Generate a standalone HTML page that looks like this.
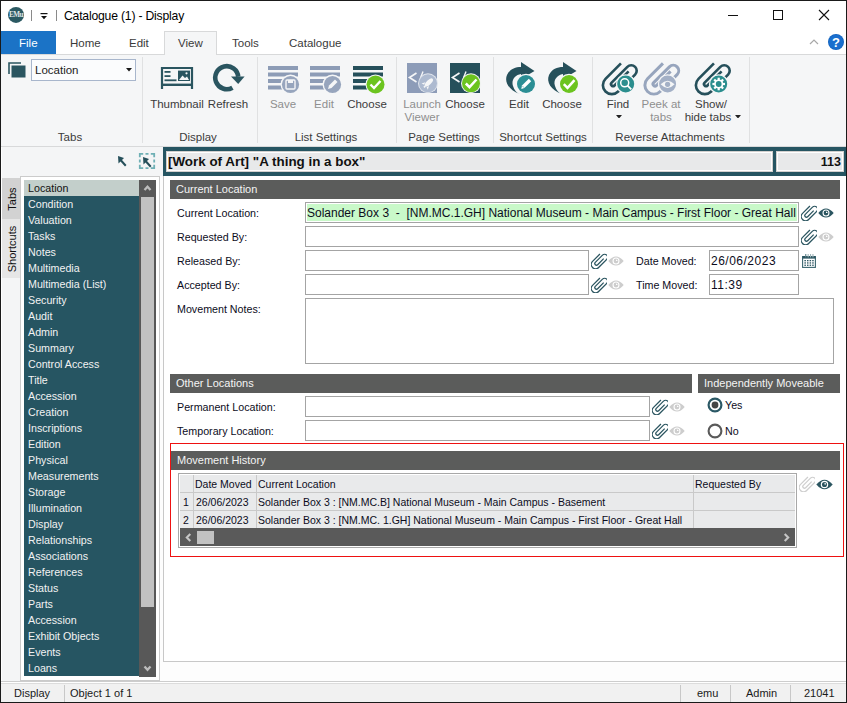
<!DOCTYPE html>
<html><head><meta charset="utf-8">
<style>
*{box-sizing:border-box;margin:0;padding:0}
html,body{width:847px;height:703px;overflow:hidden;background:#fff}
body{position:relative;font-family:"Liberation Sans",sans-serif;color:#1e1e1e}
.a{position:absolute}
.t{position:absolute;white-space:pre;line-height:14px}
#frame{left:0;top:0;width:847px;height:703px;border:1px solid #1a1a1a;z-index:50;pointer-events:none}
.sep{position:absolute;width:1px;background:#e0e1e2}
.rl{position:absolute;white-space:pre;font-size:11.5px;color:#3b3b3b;line-height:14px;text-align:center}
.dis{color:#8f8f8f}
.hdr{position:absolute;background:#5b5c5b;color:#f4f4f4;font-size:11px;line-height:19px;padding-left:6px;white-space:pre}
.fld{position:absolute;border:1px solid #a4a4a4;background:#fff;height:21px}
.lbl{position:absolute;white-space:pre;font-size:10.7px;line-height:14px;color:#0c0c1c}
.gt{position:absolute;white-space:pre;font-size:10.5px;line-height:14px;color:#0c0c1c}
.li{position:absolute;left:28px;font-size:10.7px;color:#f2f2f2;white-space:pre;line-height:16px}
</style></head><body>
<div id="frame" class="a"></div>

<!-- title bar -->
<svg class="a" style="left:7px;top:6px" width="18" height="18" viewBox="0 0 18 18"><circle cx="9" cy="8.9" r="8" fill="#2b5962"/><text x="9" y="11.2" font-family="Liberation Serif" font-weight="bold" font-size="7.2" fill="#e0e8e8" text-anchor="middle" letter-spacing="-0.5">EMu</text></svg>
<div class="a" style="left:31px;top:10px;width:1px;height:11px;background:#8a8a8a"></div>
<svg class="a" style="left:40px;top:13px" width="8" height="7" viewBox="0 0 8 7"><rect x="0.5" y="0" width="7" height="1.2" fill="#111"/><path d="M1 3 L7 3 L4 6.2 Z" fill="#111"/></svg>
<div class="a" style="left:56px;top:10px;width:1px;height:11px;background:#8a8a8a"></div>
<div class="t" style="left:64px;top:9px;font-size:12.2px;letter-spacing:-0.2px;color:#000">Catalogue (1) - Display</div>
<div class="a" style="left:728px;top:15px;width:10px;height:1px;background:#111"></div>
<div class="a" style="left:773px;top:10px;width:10px;height:10px;border:1px solid #111"></div>
<svg class="a" style="left:818px;top:9px" width="12" height="12" viewBox="0 0 12 12"><path d="M1 1 L11 11 M11 1 L1 11" stroke="#111" stroke-width="1.1"/></svg>

<!-- tabs row -->
<div class="a" style="left:1px;top:31px;width:55px;height:23px;background:#1b73c6"></div>
<div class="t" style="left:19px;top:36px;font-size:11.5px;color:#fff">File</div>
<div class="a" style="left:164px;top:31px;width:53px;height:24px;background:#f5f6f7;border:1px solid #d8d9da;border-bottom:none;z-index:2"></div>
<div class="t" style="left:70px;top:36px;font-size:11.5px;color:#3a3a3a">Home</div>
<div class="t" style="left:129px;top:36px;font-size:11.5px;color:#3a3a3a">Edit</div>
<div class="t" style="left:178px;top:36px;font-size:11.5px;color:#3a3a3a;z-index:3">View</div>
<div class="t" style="left:232px;top:36px;font-size:11.5px;color:#3a3a3a">Tools</div>
<div class="t" style="left:289px;top:36px;font-size:11.5px;color:#3a3a3a">Catalogue</div>
<svg class="a" style="left:809px;top:38px" width="10" height="7" viewBox="0 0 10 7"><path d="M1 6 L5 2 L9 6" stroke="#a8a8a8" stroke-width="1.2" fill="none"/></svg>
<svg class="a" style="left:827px;top:33px" width="18" height="18" viewBox="0 0 18 18"><circle cx="9" cy="9" r="8" fill="#1565c0"/><circle cx="9" cy="9" r="7.2" fill="#1a6fce"/><text x="9" y="13.6" font-family="Liberation Sans" font-weight="bold" font-size="13" fill="#fff" text-anchor="middle">?</text></svg>

<!-- ribbon body -->
<div class="a" style="left:1px;top:54px;width:845px;height:93px;background:#f5f6f7;border-top:1px solid #d8d9da;border-bottom:1px solid #d8d9da"></div>
<div class="sep" style="left:142px;top:57px;height:86px"></div>
<div class="sep" style="left:257px;top:57px;height:86px"></div>
<div class="sep" style="left:396px;top:57px;height:86px"></div>
<div class="sep" style="left:493px;top:57px;height:86px"></div>
<div class="sep" style="left:592px;top:57px;height:86px"></div>
<div class="sep" style="left:749px;top:57px;height:86px"></div>

<!-- tabs group -->
<svg class="a" style="left:8px;top:62px" width="18" height="16" viewBox="0 0 18 16"><path d="M1 12 V1 H13" stroke="#2a5560" stroke-width="1.6" fill="none"/><rect x="3.5" y="3.5" width="14" height="12" fill="#2a5560"/></svg>
<div class="a" style="left:31px;top:59px;width:105px;height:22px;border:1px solid #a8b6cc;background:#fbfcfd"></div>
<div class="t" style="left:35px;top:63px;font-size:11.5px;color:#222">Location</div>
<svg class="a" style="left:125.5px;top:68px" width="6" height="3.5" viewBox="0 0 6 3.5"><path d="M0 0 H6 L3 3.5 Z" fill="#1a1a1a"/></svg>
<div class="rl" style="left:50px;top:130px;width:40px">Tabs</div>

<!-- display group -->
<svg class="a" style="left:160px;top:66px" width="34" height="24" viewBox="0 0 34 24"><path d="M2 23 V2 H32 V23" stroke="#2a5560" stroke-width="2.2" fill="none"/><rect x="1" y="17.6" width="32" height="2.4" fill="#2a5560"/><rect x="4.5" y="5" width="6" height="1.8" fill="#2a5560"/><rect x="4.5" y="9.2" width="6" height="1.8" fill="#2a5560"/><rect x="4.5" y="13.4" width="12" height="1.8" fill="#2a5560"/><rect x="18" y="4.6" width="12" height="10.4" fill="#2a5560"/><path d="M19 14 L22.5 9.5 L25 12 L27 10.5 L29 14Z" fill="#f5f6f7"/><circle cx="26.5" cy="7.3" r="1.1" fill="#f5f6f7"/></svg>
<svg class="a" style="left:212px;top:63px" width="34" height="30" viewBox="0 0 34 30"><path d="M20.45 24.66 A11.5 11.5 0 1 1 26.2 13.7" stroke="#2a5560" stroke-width="4.6" fill="none"/><path d="M19 13.4 L32.6 13.4 L26.2 21 Z" fill="#2a5560"/></svg>
<div class="rl" style="left:144px;top:97px;width:66px">Thumbnail</div>
<div class="rl" style="left:206px;top:97px;width:44px">Refresh</div>
<div class="rl" style="left:170px;top:130px;width:56px">Display</div>

<!-- list settings -->
<svg class="a" style="left:267px;top:65px" width="34" height="30" viewBox="0 0 34 30"><g fill="#8d9cb6"><rect x="1" y="1" width="30" height="4"/><rect x="1" y="7.5" width="30" height="4"/><rect x="1" y="14" width="20" height="4"/><rect x="1" y="20.5" width="16" height="4"/></g><circle cx="23.5" cy="19.5" r="10" fill="#f5f6f7"/><circle cx="23.5" cy="19.5" r="8.6" fill="#97a5bd"/><rect x="19" y="15" width="9" height="9" rx="1" fill="none" stroke="#f5f6f7" stroke-width="1.4"/><rect x="21" y="15" width="5" height="3" fill="#f5f6f7"/></svg>
<svg class="a" style="left:309px;top:65px" width="34" height="30" viewBox="0 0 34 30"><g fill="#8d9cb6"><rect x="1" y="1" width="30" height="4"/><rect x="1" y="7.5" width="30" height="4"/><rect x="1" y="14" width="20" height="4"/><rect x="1" y="20.5" width="16" height="4"/></g><circle cx="23.5" cy="19.5" r="10" fill="#f5f6f7"/><circle cx="23.5" cy="19.5" r="8.6" fill="#97a5bd"/><path d="M19 24 L20 20.5 L26 14.5 L28.5 17 L22.5 23 Z" fill="#f5f6f7"/></svg>
<svg class="a" style="left:352px;top:65px" width="34" height="30" viewBox="0 0 34 30"><g fill="#26505b"><rect x="1" y="1" width="30" height="4"/><rect x="1" y="7.5" width="30" height="4"/><rect x="1" y="14" width="20" height="4"/><rect x="1" y="20.5" width="16" height="4"/></g><circle cx="23.5" cy="19.5" r="10" fill="#f5f6f7"/><circle cx="23.5" cy="19.5" r="9" fill="#6cc41f"/><path d="M18.5 19.5 L22 23 L28.5 16" stroke="#fff" stroke-width="2.4" fill="none"/></svg>
<div class="rl dis" style="left:266px;top:97px;width:34px">Save</div>
<div class="rl dis" style="left:309px;top:97px;width:30px">Edit</div>
<div class="rl" style="left:344px;top:97px;width:46px">Choose</div>
<div class="rl" style="left:285px;top:130px;width:82px">List Settings</div>

<!-- page settings -->
<svg class="a" style="left:406px;top:62px" width="34" height="32" viewBox="0 0 34 32"><rect x="1" y="1" width="30" height="30" fill="#8d9cb8"/><path d="M10.5 11 L3.5 15.5 L10.5 20" stroke="#f5f6f7" stroke-width="1.7" fill="none"/><path d="M17 9.5 L14.5 16" stroke="#f5f6f7" stroke-width="1.4"/><circle cx="22" cy="21.3" r="10" fill="#dfe4ec"/><circle cx="22" cy="21.3" r="9" fill="#adbad0"/><g transform="rotate(45 22 21.3)" fill="#f5f6f7"><ellipse cx="22" cy="20" rx="2.3" ry="5.2"/><path d="M19.3 22.5 L17.6 26 L20.2 25 Z M24.7 22.5 L26.4 26 L23.8 25 Z"/><rect x="21.2" y="25" width="1.6" height="2"/></g></svg>
<svg class="a" style="left:449px;top:62px" width="34" height="32" viewBox="0 0 34 32"><rect x="1" y="1" width="30" height="30" fill="#26505b"/><path d="M10.5 11 L3.5 15.5 L10.5 20" stroke="#f5f6f7" stroke-width="1.7" fill="none"/><path d="M17 9.5 L14.5 16" stroke="#f5f6f7" stroke-width="1.4"/><circle cx="22" cy="21.3" r="10" fill="#f0f3f0"/><circle cx="22" cy="21.3" r="9" fill="#6cc41f"/><path d="M16.8 21.5 L20.5 25.2 L27.5 17.5" stroke="#fff" stroke-width="2.5" fill="none"/></svg>
<div class="rl dis" style="left:400px;top:97px;width:44px">Launch</div>
<div class="rl dis" style="left:400px;top:110px;width:44px">Viewer</div>
<div class="rl" style="left:442px;top:97px;width:46px">Choose</div>
<div class="rl" style="left:400px;top:130px;width:88px">Page Settings</div>

<!-- shortcut settings -->
<svg class="a" style="left:504px;top:61px" width="34" height="34" viewBox="0 0 34 34"><path d="M15.5 33 C5 29 0 21 3 14 C6 8 11 6 17 6 L17 1 L30.5 10 L17 18 L17 13 C11 14 7 19 9 25 C10 29 13 32 15.5 33 Z" fill="#26505b"/><circle cx="22" cy="23" r="10.3" fill="#f5f6f7"/><circle cx="22" cy="23" r="9" fill="#2b8e94"/><path d="M17.3 28 L18 24.6 L24.8 17.8 L27.2 20.2 L20.4 27 Z" fill="#fff"/><path d="M18.6 25.2 L20 26.6" stroke="#2b8e94" stroke-width="0.7"/></svg>
<svg class="a" style="left:546px;top:61px" width="34" height="34" viewBox="0 0 34 34"><path d="M15.5 33 C5 29 0 21 3 14 C6 8 11 6 17 6 L17 1 L30.5 10 L17 18 L17 13 C11 14 7 19 9 25 C10 29 13 32 15.5 33 Z" fill="#26505b"/><circle cx="23" cy="23" r="10.3" fill="#f5f6f7"/><circle cx="23" cy="23" r="9" fill="#6cc41f"/><path d="M17.8 23.2 L21.5 26.9 L28.5 19.2" stroke="#fff" stroke-width="2.5" fill="none"/></svg>
<div class="rl" style="left:501px;top:97px;width:36px">Edit</div>
<div class="rl" style="left:539px;top:97px;width:46px">Choose</div>
<div class="rl" style="left:494px;top:130px;width:98px">Shortcut Settings</div>

<!-- reverse attachments -->
<svg class="a" style="left:599px;top:58px" width="40" height="40" viewBox="-20 -20 40 40"><path transform="rotate(45) scale(1.15)" d="M -7.8 -10.2 L -7.8 8.8 A 7.8 7.8 0 0 0 7.8 8.8 L 7.8 -12 A 4.75 4.75 0 0 0 -1.7 -12 L -1.7 7.35 A 1.75 1.75 0 0 0 1.8 7.35 L 1.8 -10" stroke="#26505b" stroke-width="2.3" fill="none"/><circle cx="6.7000000000000455" cy="6" r="9.8" fill="#f5f6f7"/><circle cx="6.7000000000000455" cy="6" r="8.5" fill="#2b8e8e"/><g transform="translate(6.7000000000000455 6)"><circle cx="-1" cy="-1.2" r="4" stroke="#fff" stroke-width="1.5" fill="none"/><path d="M1.9 1.7 L5.6 5.4" stroke="#fff" stroke-width="1.8"/></g></svg>
<svg class="a" style="left:641px;top:58px" width="40" height="40" viewBox="-20 -20 40 40"><path transform="rotate(45) scale(1.15)" d="M -7.8 -10.2 L -7.8 8.8 A 7.8 7.8 0 0 0 7.8 8.8 L 7.8 -12 A 4.75 4.75 0 0 0 -1.7 -12 L -1.7 7.35 A 1.75 1.75 0 0 0 1.8 7.35 L 1.8 -10" stroke="#97a5bd" stroke-width="2.6" fill="none"/><circle cx="6.600000000000023" cy="6" r="9.8" fill="#f5f6f7"/><circle cx="6.600000000000023" cy="6" r="8.5" fill="#a3b0c6"/><g transform="translate(6.600000000000023 6)"><path d="M-7 0.3 Q0 -7 7 0.3 Q0 7.6 -7 0.3Z" fill="#f5f6f7"/><circle cx="0" cy="0.3" r="2.6" fill="#a3b0c6"/></g></svg>
<svg class="a" style="left:692px;top:58px" width="40" height="40" viewBox="-20 -20 40 40"><path transform="rotate(45) scale(1.15)" d="M -7.8 -10.2 L -7.8 8.8 A 7.8 7.8 0 0 0 7.8 8.8 L 7.8 -12 A 4.75 4.75 0 0 0 -1.7 -12 L -1.7 7.35 A 1.75 1.75 0 0 0 1.8 7.35 L 1.8 -10" stroke="#26505b" stroke-width="2.3" fill="none"/><circle cx="6.7000000000000455" cy="6" r="9.8" fill="#f5f6f7"/><circle cx="6.7000000000000455" cy="6" r="8.5" fill="#2b8e8e"/><g transform="translate(6.7000000000000455 6)"><rect x="-1.1" y="-6.3" width="2.2" height="2.6" fill="#fff" transform="rotate(0)"/><rect x="-1.1" y="-6.3" width="2.2" height="2.6" fill="#fff" transform="rotate(45)"/><rect x="-1.1" y="-6.3" width="2.2" height="2.6" fill="#fff" transform="rotate(90)"/><rect x="-1.1" y="-6.3" width="2.2" height="2.6" fill="#fff" transform="rotate(135)"/><rect x="-1.1" y="-6.3" width="2.2" height="2.6" fill="#fff" transform="rotate(180)"/><rect x="-1.1" y="-6.3" width="2.2" height="2.6" fill="#fff" transform="rotate(225)"/><rect x="-1.1" y="-6.3" width="2.2" height="2.6" fill="#fff" transform="rotate(270)"/><rect x="-1.1" y="-6.3" width="2.2" height="2.6" fill="#fff" transform="rotate(315)"/><circle cx="0" cy="0" r="4.6" fill="#fff"/><circle cx="0" cy="0" r="2.9" fill="#2b8e8e"/></g></svg>
<div class="rl" style="left:600px;top:97px;width:36px">Find</div>
<svg class="a" style="left:615.5px;top:114.5px" width="6" height="3.5" viewBox="0 0 6 3.5"><path d="M0 0 H6 L3 3.5 Z" fill="#222"/></svg>
<div class="rl dis" style="left:638px;top:97px;width:46px">Peek at</div>
<div class="rl dis" style="left:638px;top:110px;width:46px">tabs</div>
<div class="rl" style="left:688px;top:97px;width:46px">Show/</div>
<div class="rl" style="left:680px;top:110px;width:56px">hide tabs</div>
<svg class="a" style="left:735px;top:114.5px" width="6" height="3.5" viewBox="0 0 6 3.5"><path d="M0 0 H6 L3 3.5 Z" fill="#222"/></svg>
<div class="rl" style="left:606px;top:130px;width:128px">Reverse Attachments</div>

<!-- below ribbon background -->
<div class="a" style="left:1px;top:147px;width:162px;height:535px;background:#f4f5f6"></div>
<div class="a" style="left:160px;top:176px;width:686px;height:505px;background:#fdfdfd"></div>

<!-- pointer icons -->
<svg class="a" style="left:116px;top:154px" width="12" height="14" viewBox="0 0 12 14"><path d="M2 2 L8 4 L6 6 L10.5 11 L9 12.5 L4.5 7.5 L2.5 9.5 Z" fill="#26505b"/></svg>
<svg class="a" style="left:138px;top:152px" width="18" height="18" viewBox="0 0 18 18"><path d="M1.8 5.2 V1.8 H5.2 M12.8 1.8 H16.2 V5.2 M16.2 12.8 V16.2 H12.8 M5.2 16.2 H1.8 V12.8 M7.5 1.8 H10.5 M7.5 16.2 H10.5 M1.8 7.5 V10.5 M16.2 7.5 V10.5" stroke="#6fb0b5" stroke-width="1.8" fill="none"/><path d="M5 5 L11 7 L9 9 L13.5 14 L12 15.5 L7.5 10.5 L5.5 12.5 Z" fill="#26505b"/></svg>

<!-- vertical tabs -->
<div class="a" style="left:1px;top:147px;width:1px;height:535px;background:#fff"></div>
<div class="a" style="left:2px;top:178px;width:18px;height:41px;background:#d2d2d2"></div>
<div class="a" style="left:2px;top:219px;width:18px;height:59px;background:#e6e6e6"></div>
<div class="t" style="left:-7px;top:192px;width:38px;text-align:center;font-size:11px;transform:rotate(-90deg);color:#111">Tabs</div>
<div class="t" style="left:-19px;top:242px;width:62px;text-align:center;font-size:11px;transform:rotate(-90deg);color:#111">Shortcuts</div>

<!-- left panel -->
<div class="a" style="left:20px;top:176px;width:140px;height:505px;background:#fff;border:1px solid #cbcbcb"></div>
<div class="a" style="left:24px;top:180px;width:115px;height:496px;background:#265562"></div>
<div class="a" style="left:24px;top:180px;width:115px;height:16px;background:#c3cfcb"></div>
<div class="a" style="left:139px;top:180px;width:17px;height:497px;background:#585858"></div>
<div class="a" style="left:141px;top:197px;width:13px;height:410px;background:#c2c2c2"></div>
<svg class="a" style="left:143px;top:185px" width="9" height="7" viewBox="0 0 9 7"><path d="M1.5 5 L4.5 1.8 L7.5 5" stroke="#bdbdbd" stroke-width="2.3" fill="none"/></svg>
<svg class="a" style="left:143px;top:665px" width="9" height="7" viewBox="0 0 9 7"><path d="M1.5 1.5 L4.5 4.7 L7.5 1.5" stroke="#bdbdbd" stroke-width="2.3" fill="none"/></svg>
<div id="list">
<div class="li" style="top:180px;color:#111">Location</div>
<div class="li" style="top:196px">Condition</div>
<div class="li" style="top:212px">Valuation</div>
<div class="li" style="top:228px">Tasks</div>
<div class="li" style="top:244px">Notes</div>
<div class="li" style="top:260px">Multimedia</div>
<div class="li" style="top:276px">Multimedia (List)</div>
<div class="li" style="top:292px">Security</div>
<div class="li" style="top:308px">Audit</div>
<div class="li" style="top:324px">Admin</div>
<div class="li" style="top:340px">Summary</div>
<div class="li" style="top:356px">Control Access</div>
<div class="li" style="top:372px">Title</div>
<div class="li" style="top:388px">Accession</div>
<div class="li" style="top:404px">Creation</div>
<div class="li" style="top:420px">Inscriptions</div>
<div class="li" style="top:436px">Edition</div>
<div class="li" style="top:452px">Physical</div>
<div class="li" style="top:468px">Measurements</div>
<div class="li" style="top:484px">Storage</div>
<div class="li" style="top:500px">Illumination</div>
<div class="li" style="top:516px">Display</div>
<div class="li" style="top:532px">Relationships</div>
<div class="li" style="top:548px">Associations</div>
<div class="li" style="top:564px">References</div>
<div class="li" style="top:580px">Status</div>
<div class="li" style="top:596px">Parts</div>
<div class="li" style="top:612px">Accession</div>
<div class="li" style="top:628px">Exhibit Objects</div>
<div class="li" style="top:644px">Events</div>
<div class="li" style="top:660px">Loans</div>
</div>

<!-- record title bar -->
<div class="a" style="left:163px;top:147px;width:683px;height:29px;background:#265562"></div>
<div class="a" style="left:166px;top:151px;width:607px;height:21px;background:#e8e9ea;border:1px solid #d2d0ce;box-shadow:inset 0 0 0 1px #fff"></div>
<div class="a" style="left:776px;top:151px;width:68px;height:21px;background:#e8e9ea;border:1px solid #d2d0ce;box-shadow:inset 0 0 0 1px #fff"></div>
<div class="t" style="left:168px;top:155px;font-size:13.4px;font-weight:bold;color:#111">[Work of Art] "A thing in a box"</div>
<div class="t" style="left:776px;top:155px;width:65px;text-align:right;font-size:12.5px;font-weight:bold;color:#111">113</div>

<!-- main content -->
<div class="a" style="left:163px;top:176px;width:683px;height:486px;background:#fff;border-left:1px solid #c8c8c8;border-bottom:1px solid #c8c8c8"></div>

<div class="hdr" style="left:170px;top:180px;width:670px">Current Location</div>
<div class="lbl" style="left:177px;top:206px">Current Location:</div>
<div class="fld" style="left:305px;top:202px;width:494px;background:#c9f9c9;box-shadow:inset 0 0 0 1px #fff"></div>
<div class="t" style="left:307px;top:206px;font-size:12px;color:#0c0c1c">Solander Box 3  -  [NM.MC.1.GH] National Museum - Main Campus - First Floor - Great Hall</div>
<div class="lbl" style="left:177px;top:230px">Requested By:</div>
<div class="fld" style="left:305px;top:226px;width:494px"></div>
<div class="lbl" style="left:177px;top:254px">Released By:</div>
<div class="fld" style="left:305px;top:250px;width:284px"></div>
<div class="lbl" style="left:177px;top:278px">Accepted By:</div>
<div class="fld" style="left:305px;top:274px;width:284px"></div>
<div class="lbl" style="left:636px;top:254px">Date Moved:</div>
<div class="fld" style="left:709px;top:250px;width:90px"></div>
<div class="t" style="left:711px;top:254px;font-size:12px;letter-spacing:0.5px;color:#0c0c1c">26/06/2023</div>
<div class="lbl" style="left:636px;top:278px">Time Moved:</div>
<div class="fld" style="left:709px;top:274px;width:90px"></div>
<div class="t" style="left:711px;top:278px;font-size:12px;letter-spacing:0.5px;color:#0c0c1c">11:39</div>
<div class="lbl" style="left:177px;top:302px">Movement Notes:</div>
<div class="fld" style="left:305px;top:298px;width:529px;height:66px"></div>

<div class="hdr" style="left:170px;top:374px;width:522px">Other Locations</div>
<div class="hdr" style="left:698px;top:374px;width:142px">Independently Moveable</div>
<div class="lbl" style="left:177px;top:400px">Permanent Location:</div>
<div class="fld" style="left:305px;top:396px;width:345px"></div>
<div class="lbl" style="left:177px;top:424px">Temporary Location:</div>
<div class="fld" style="left:305px;top:420px;width:345px"></div>

<svg class="a" style="left:801.0px;top:205.0px" width="16" height="16" viewBox="-16 -16 32 32"><path transform="rotate(45) scale(1.1)" d="M -7.8 -10.2 L -7.8 8.8 A 7.8 7.8 0 0 0 7.8 8.8 L 7.8 -12 A 5.4 5.4 0 0 0 -3 -12 L -3 6.5 A 3 3 0 0 0 3 6.5 L 3 -9" stroke="#2b5560" stroke-width="2.3" fill="none"/></svg>
<svg class="a" style="left:818px;top:208.0px" width="16" height="10" viewBox="0 0 16 10"><path d="M0.3 5 Q8 -4 15.7 5 Q8 14 0.3 5Z" fill="#2b5560"/><circle cx="8" cy="5" r="3.5" fill="#fff"/><circle cx="8" cy="5" r="2.4" fill="#2b5560"/><path d="M8 5 V3.4 A1.6 1.6 0 0 1 9.6 5 Z" fill="#fff"/></svg>
<svg class="a" style="left:801.0px;top:229.0px" width="16" height="16" viewBox="-16 -16 32 32"><path transform="rotate(45) scale(1.1)" d="M -7.8 -10.2 L -7.8 8.8 A 7.8 7.8 0 0 0 7.8 8.8 L 7.8 -12 A 5.4 5.4 0 0 0 -3 -12 L -3 6.5 A 3 3 0 0 0 3 6.5 L 3 -9" stroke="#2b5560" stroke-width="2.3" fill="none"/></svg>
<svg class="a" style="left:818px;top:232.0px" width="16" height="10" viewBox="0 0 16 10"><path d="M0.3 5 Q8 -4 15.7 5 Q8 14 0.3 5Z" fill="#cdcdcd"/><circle cx="8" cy="5" r="3.5" fill="#fff"/><circle cx="8" cy="5" r="2.4" fill="#cdcdcd"/><path d="M8 5 V3.4 A1.6 1.6 0 0 1 9.6 5 Z" fill="#fff"/></svg>
<svg class="a" style="left:591.0px;top:253.0px" width="16" height="16" viewBox="-16 -16 32 32"><path transform="rotate(45) scale(1.1)" d="M -7.8 -10.2 L -7.8 8.8 A 7.8 7.8 0 0 0 7.8 8.8 L 7.8 -12 A 5.4 5.4 0 0 0 -3 -12 L -3 6.5 A 3 3 0 0 0 3 6.5 L 3 -9" stroke="#2b5560" stroke-width="2.3" fill="none"/></svg>
<svg class="a" style="left:608px;top:256.0px" width="16" height="10" viewBox="0 0 16 10"><path d="M0.3 5 Q8 -4 15.7 5 Q8 14 0.3 5Z" fill="#cdcdcd"/><circle cx="8" cy="5" r="3.5" fill="#fff"/><circle cx="8" cy="5" r="2.4" fill="#cdcdcd"/><path d="M8 5 V3.4 A1.6 1.6 0 0 1 9.6 5 Z" fill="#fff"/></svg>
<svg class="a" style="left:591.0px;top:277.0px" width="16" height="16" viewBox="-16 -16 32 32"><path transform="rotate(45) scale(1.1)" d="M -7.8 -10.2 L -7.8 8.8 A 7.8 7.8 0 0 0 7.8 8.8 L 7.8 -12 A 5.4 5.4 0 0 0 -3 -12 L -3 6.5 A 3 3 0 0 0 3 6.5 L 3 -9" stroke="#2b5560" stroke-width="2.3" fill="none"/></svg>
<svg class="a" style="left:608px;top:280.0px" width="16" height="10" viewBox="0 0 16 10"><path d="M0.3 5 Q8 -4 15.7 5 Q8 14 0.3 5Z" fill="#cdcdcd"/><circle cx="8" cy="5" r="3.5" fill="#fff"/><circle cx="8" cy="5" r="2.4" fill="#cdcdcd"/><path d="M8 5 V3.4 A1.6 1.6 0 0 1 9.6 5 Z" fill="#fff"/></svg>
<svg class="a" style="left:652.0px;top:399.0px" width="16" height="16" viewBox="-16 -16 32 32"><path transform="rotate(45) scale(1.1)" d="M -7.8 -10.2 L -7.8 8.8 A 7.8 7.8 0 0 0 7.8 8.8 L 7.8 -12 A 5.4 5.4 0 0 0 -3 -12 L -3 6.5 A 3 3 0 0 0 3 6.5 L 3 -9" stroke="#2b5560" stroke-width="2.3" fill="none"/></svg>
<svg class="a" style="left:669px;top:402.0px" width="16" height="10" viewBox="0 0 16 10"><path d="M0.3 5 Q8 -4 15.7 5 Q8 14 0.3 5Z" fill="#cdcdcd"/><circle cx="8" cy="5" r="3.5" fill="#fff"/><circle cx="8" cy="5" r="2.4" fill="#cdcdcd"/><path d="M8 5 V3.4 A1.6 1.6 0 0 1 9.6 5 Z" fill="#fff"/></svg>
<svg class="a" style="left:652.0px;top:423.0px" width="16" height="16" viewBox="-16 -16 32 32"><path transform="rotate(45) scale(1.1)" d="M -7.8 -10.2 L -7.8 8.8 A 7.8 7.8 0 0 0 7.8 8.8 L 7.8 -12 A 5.4 5.4 0 0 0 -3 -12 L -3 6.5 A 3 3 0 0 0 3 6.5 L 3 -9" stroke="#2b5560" stroke-width="2.3" fill="none"/></svg>
<svg class="a" style="left:669px;top:426.0px" width="16" height="10" viewBox="0 0 16 10"><path d="M0.3 5 Q8 -4 15.7 5 Q8 14 0.3 5Z" fill="#cdcdcd"/><circle cx="8" cy="5" r="3.5" fill="#fff"/><circle cx="8" cy="5" r="2.4" fill="#cdcdcd"/><path d="M8 5 V3.4 A1.6 1.6 0 0 1 9.6 5 Z" fill="#fff"/></svg>
<svg class="a" style="left:799.0px;top:476.0px" width="16" height="16" viewBox="-16 -16 32 32"><path transform="rotate(45) scale(1.1)" d="M -7.8 -10.2 L -7.8 8.8 A 7.8 7.8 0 0 0 7.8 8.8 L 7.8 -12 A 5.4 5.4 0 0 0 -3 -12 L -3 6.5 A 3 3 0 0 0 3 6.5 L 3 -9" stroke="#cfcfcf" stroke-width="2.3" fill="none"/></svg>
<svg class="a" style="left:816px;top:478.5px" width="17" height="11" viewBox="0 0 16 10"><path d="M0.3 5 Q8 -4 15.7 5 Q8 14 0.3 5Z" fill="#2b5560"/><circle cx="8" cy="5" r="3.5" fill="#fff"/><circle cx="8" cy="5" r="2.4" fill="#2b5560"/><path d="M8 5 V3.4 A1.6 1.6 0 0 1 9.6 5 Z" fill="#fff"/></svg>
<svg class="a" style="left:802px;top:254px" width="14" height="14" viewBox="0 0 14 14"><rect x="0.6" y="2.6" width="12.8" height="10.8" fill="none" stroke="#3b6670" stroke-width="1.1"/><rect x="0.5" y="2" width="13" height="2.6" fill="#2b5560"/><g fill="#2b5560"><rect x="2.4" y="6.0" width="1.5" height="1.3"/><rect x="5.0" y="6.0" width="1.5" height="1.3"/><rect x="7.6" y="6.0" width="1.5" height="1.3"/><rect x="10.200000000000001" y="6.0" width="1.5" height="1.3"/><rect x="2.4" y="8.3" width="1.5" height="1.3"/><rect x="5.0" y="8.3" width="1.5" height="1.3"/><rect x="7.6" y="8.3" width="1.5" height="1.3"/><rect x="10.200000000000001" y="8.3" width="1.5" height="1.3"/><rect x="2.4" y="10.6" width="1.5" height="1.3"/><rect x="5.0" y="10.6" width="1.5" height="1.3"/><rect x="7.6" y="10.6" width="1.5" height="1.3"/><rect x="10.200000000000001" y="10.6" width="1.5" height="1.3"/></g><g fill="#5f8288"><rect x="3.2" y="0" width="1.1" height="3.4"/><rect x="5.6" y="0" width="1.1" height="3.4" fill="#9fb4b8"/><rect x="8" y="0" width="1.1" height="3.4" fill="#9fb4b8"/><rect x="10.4" y="0" width="1.1" height="3.4" fill="#9fb4b8"/></g></svg>
<!-- radios -->
<svg class="a" style="left:706.5px;top:396.5px" width="16" height="16" viewBox="0 0 16 16"><circle cx="8" cy="8" r="6.4" stroke="#2b5865" stroke-width="2.2" fill="#fff"/><circle cx="8" cy="8" r="3.4" fill="#454545"/></svg>
<div class="lbl" style="left:725px;top:398px">Yes</div>
<svg class="a" style="left:706.5px;top:422.6px" width="16" height="16" viewBox="0 0 16 16"><circle cx="8" cy="8" r="6.4" stroke="#5a5a5a" stroke-width="2.1" fill="#fff"/></svg>
<div class="lbl" style="left:725px;top:424px">No</div>

<!-- movement history -->
<div class="a" style="left:170px;top:443px;width:674px;height:114px;border:1px solid #ee1111"></div>
<div class="hdr" style="left:171px;top:451px;width:669px">Movement History</div>
<div class="a" style="left:178px;top:473px;width:619px;height:75px;border:1px solid #a8a8a8;background:#e9eaeb"></div>
<div class="a" style="left:179px;top:474px;width:617px;height:73px;background:#fff"></div>
<div class="a" style="left:180px;top:475px;width:615px;height:53px;background:#e9eaeb"></div>
<div class="a" style="left:180px;top:492px;width:615px;height:1px;background:#c9c9c9"></div>
<div class="a" style="left:180px;top:510px;width:615px;height:1px;background:#c9c9c9"></div>
<div class="a" style="left:193px;top:475px;width:1px;height:53px;background:#c9c9c9"></div>
<div class="a" style="left:256px;top:475px;width:1px;height:53px;background:#c9c9c9"></div>
<div class="a" style="left:693px;top:475px;width:1px;height:53px;background:#c9c9c9"></div>
<div class="a" style="left:180px;top:528px;width:615px;height:18px;background:#5a5a5a"></div>
<div class="a" style="left:197px;top:531px;width:17px;height:13px;background:#c2c2c2"></div>
<svg class="a" style="left:185px;top:533px" width="7" height="9" viewBox="0 0 7 9"><path d="M5.3 1 L1.8 4.5 L5.3 8" stroke="#c6c6c6" stroke-width="2.1" fill="none"/></svg>
<svg class="a" style="left:783px;top:533px" width="7" height="9" viewBox="0 0 7 9"><path d="M1.7 1 L5.2 4.5 L1.7 8" stroke="#c6c6c6" stroke-width="2.1" fill="none"/></svg>
<div class="gt" style="left:195px;top:477px">Date Moved</div>
<div class="gt" style="left:258px;top:477px">Current Location</div>
<div class="gt" style="left:695px;top:477px">Requested By</div>
<div class="gt" style="left:183px;top:495px">1</div>
<div class="gt" style="left:196px;top:495px">26/06/2023</div>
<div class="gt" style="left:258px;top:495px">Solander Box 3 : [NM.MC.B] National Museum - Main Campus - Basement</div>
<div class="gt" style="left:183px;top:513px">2</div>
<div class="gt" style="left:196px;top:513px">26/06/2023</div>
<div class="gt" style="left:258px;top:513px">Solander Box 3 : [NM.MC. 1.GH] National Museum - Main Campus - First Floor - Great Hall</div>

<!-- status bar -->
<div class="a" style="left:1px;top:681px;width:845px;height:1px;background:#cdcdcd"></div>
<div class="a" style="left:1px;top:682px;width:845px;height:1px;background:#fff"></div>
<div class="a" style="left:1px;top:683px;width:845px;height:1px;background:#dcdcdc"></div>
<div class="a" style="left:1px;top:684px;width:845px;height:18px;background:#f1f1f1"></div>
<div class="t" style="left:14px;top:686px;font-size:11px;color:#1a1a1a">Display</div>
<div class="a" style="left:64px;top:685px;width:1px;height:17px;background:#c8c8c8"></div>
<div class="t" style="left:70px;top:686px;font-size:11px;color:#1a1a1a">Object 1 of 1</div>
<div class="a" style="left:680px;top:685px;width:1px;height:17px;background:#c8c8c8"></div>
<div class="t" style="left:697px;top:686px;font-size:11px;color:#1a1a1a">emu</div>
<div class="a" style="left:730px;top:685px;width:1px;height:17px;background:#c8c8c8"></div>
<div class="t" style="left:746px;top:686px;font-size:11px;color:#1a1a1a">Admin</div>
<div class="a" style="left:790px;top:685px;width:1px;height:17px;background:#c8c8c8"></div>
<div class="t" style="left:804px;top:686px;font-size:11px;color:#1a1a1a">21041</div>
</body></html>
